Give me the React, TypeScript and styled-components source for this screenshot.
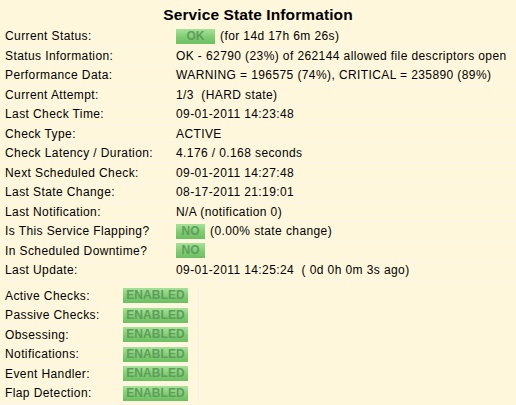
import React from "react";
import styled, { createGlobalStyle } from "styled-components";

const GlobalStyle = createGlobalStyle`
  html, body {
    margin: 0;
    padding: 0;
    background: #fef7dc;
  }
  body {
    font-family: "Liberation Sans", Arial, sans-serif;
    font-size: 12px;
    letter-spacing: 0.4px;
    color: #000;
  }
`;

const Page = styled.div`
  padding: 5px 0 0 0;
`;

const Title = styled.div`
  text-align: center;
  font-weight: bold;
  font-size: 15.5px;
  letter-spacing: 0.1px;
  height: 22px;
  line-height: 19px;
`;

const InfoTable = styled.div<{ $labelWidth: number; $width?: string }>`
  display: grid;
  grid-template-columns: ${(p) => p.$labelWidth}px 1fr;
  width: ${(p) => p.$width || "100%"};
`;

const Cell = styled.div`
  height: 18.5px;
  line-height: 18.5px;
  border-bottom: 1px solid #fbf5ea;
  white-space: nowrap;
  display: flex;
  align-items: center;
`;

const Label = styled(Cell)`
  padding-left: 5px;
`;

const Value = styled(Cell)``;

const Badge = styled.span<{ $w: number }>`
  display: inline-block;
  width: ${(p) => p.$w}px;
  height: 15px;
  line-height: 15px;
  text-align: center;
  font-weight: bold;
  font-size: 12px;
  letter-spacing: 0.1px;
  color: #5f9d5c;
  background: linear-gradient(#a6e29a, #7fcc72 55%, #6cbf62);
  margin-right: 5px;
`;

const Detail = styled.span``;

const ToggleTable = styled(InfoTable)`
  margin-top: 6px;
  border-right: 1px solid #f8f1e2;
`;

type Row = { label: string; value: React.ReactNode };

const rows: Row[] = [
  {
    label: "Current Status:",
    value: (
      <>
        <Badge $w={39}>OK</Badge>
        <Detail>(for 14d 17h 6m 26s)</Detail>
      </>
    ),
  },
  { label: "Status Information:", value: "OK - 62790 (23%) of 262144 allowed file descriptors open" },
  { label: "Performance Data:", value: "WARNING = 196575 (74%), CRITICAL = 235890 (89%)" },
  { label: "Current Attempt:", value: "1/3\u00a0\u00a0(HARD state)" },
  { label: "Last Check Time:", value: "09-01-2011 14:23:48" },
  { label: "Check Type:", value: "ACTIVE" },
  { label: "Check Latency / Duration:", value: "4.176\u00a0/\u00a00.168 seconds" },
  { label: "Next Scheduled Check:", value: "09-01-2011 14:27:48" },
  { label: "Last State Change:", value: "08-17-2011 21:19:01" },
  { label: "Last Notification:", value: "N/A (notification 0)" },
  {
    label: "Is This Service Flapping?",
    value: (
      <>
        <Badge $w={29}>NO</Badge>
        <Detail>(0.00% state change)</Detail>
      </>
    ),
  },
  {
    label: "In Scheduled Downtime?",
    value: <Badge $w={29}>NO</Badge>,
  },
  { label: "Last Update:", value: "09-01-2011 14:25:24\u00a0\u00a0( 0d 0h 0m 3s ago)" },
];

const toggles = [
  "Active Checks:",
  "Passive Checks:",
  "Obsessing:",
  "Notifications:",
  "Event Handler:",
  "Flap Detection:",
];

export default function App() {
  return (
    <Page>
      <GlobalStyle />
      <Title>Service State Information</Title>
      <InfoTable $labelWidth={176}>
        {rows.map((r) => (
          <React.Fragment key={r.label}>
            <Label>{r.label}</Label>
            <Value>{r.value}</Value>
          </React.Fragment>
        ))}
      </InfoTable>
      <ToggleTable $labelWidth={123} $width="198px">
        {toggles.map((t) => (
          <React.Fragment key={t}>
            <Label>{t}</Label>
            <Value>
              <Badge $w={65}>ENABLED</Badge>
            </Value>
          </React.Fragment>
        ))}
      </ToggleTable>
    </Page>
  );
}
